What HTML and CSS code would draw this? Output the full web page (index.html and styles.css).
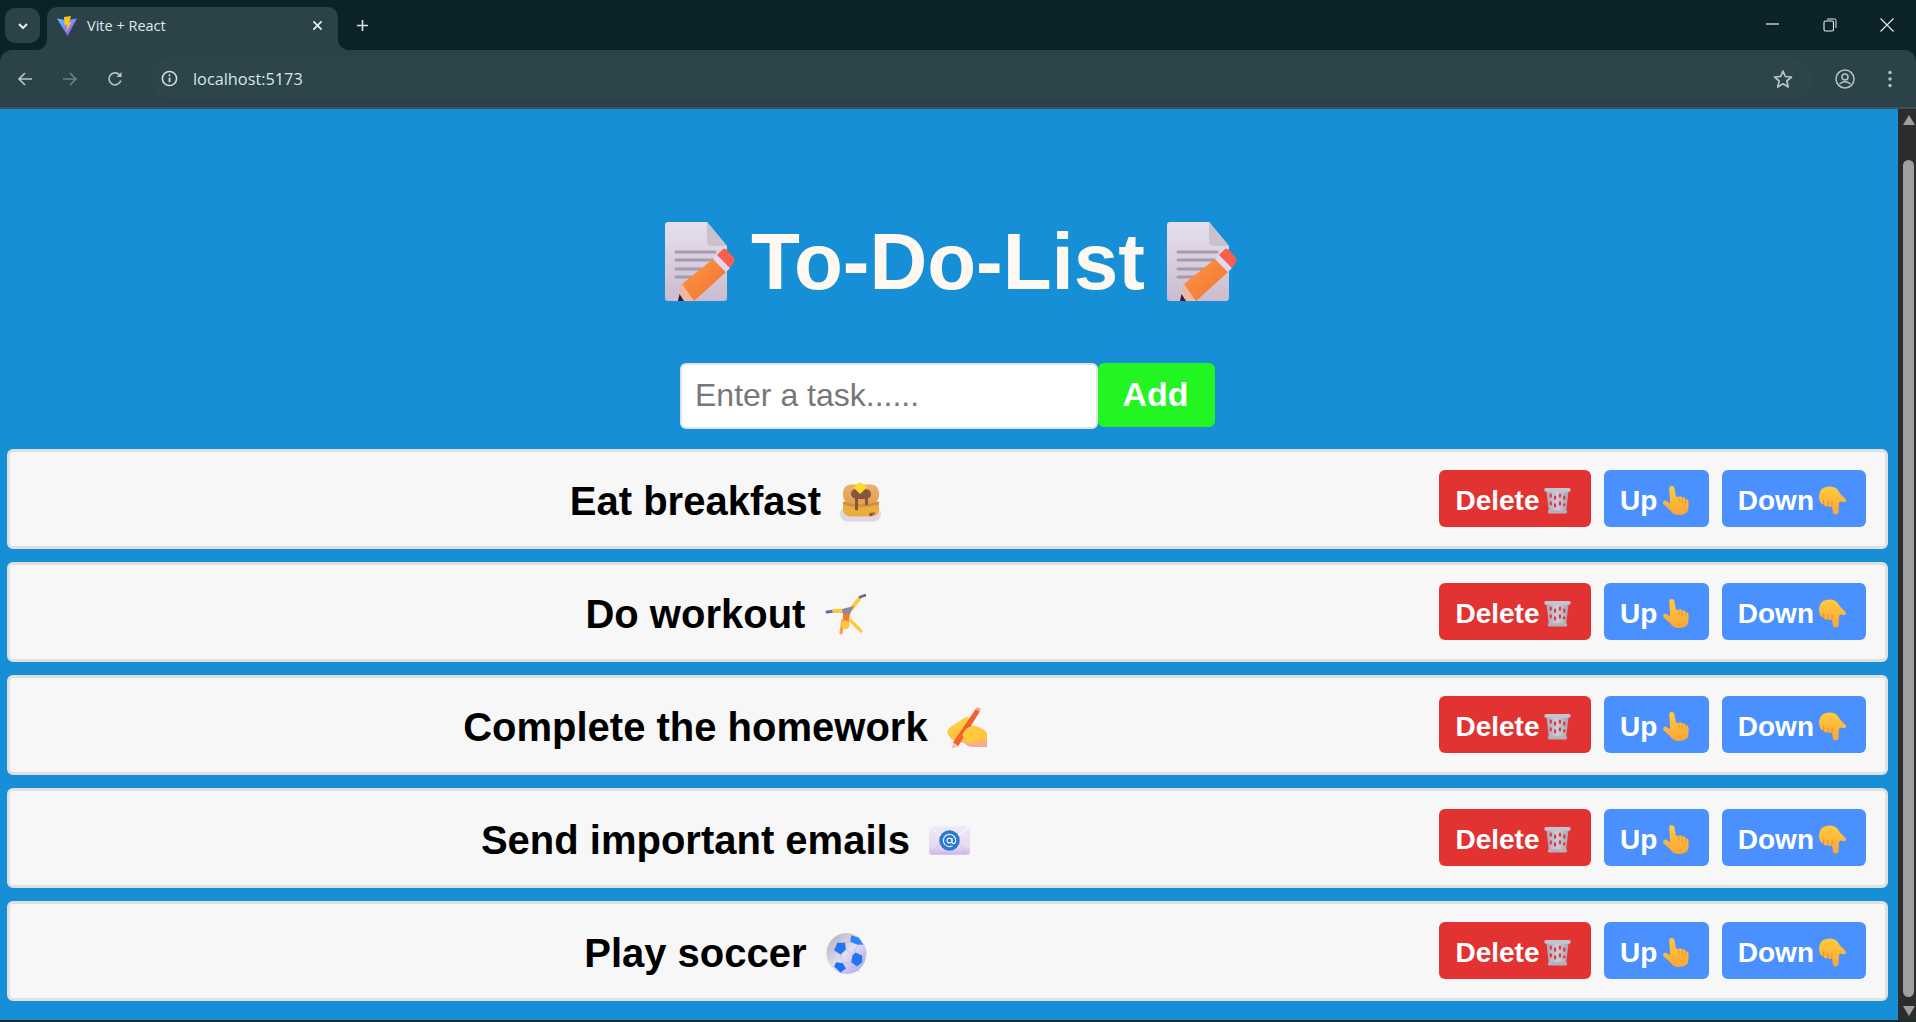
FILE: index.html
```html
<!DOCTYPE html>
<html lang="en">
<head>
<meta charset="utf-8">
<title>Vite + React</title>
<link rel="stylesheet" href="styles.css">
</head>
<body>
<svg class="defs" width="0" height="0" aria-hidden="true">
  <defs>
    <linearGradient id="paper" x1="0" y1="0" x2="0" y2="1"><stop offset="0" stop-color="#e6dfee"/><stop offset="1" stop-color="#cbbccf"/></linearGradient>
    <linearGradient id="orange" x1="0" y1="0" x2="1" y2="1"><stop offset="0" stop-color="#ff9a45"/><stop offset="1" stop-color="#f0702f"/></linearGradient>
    <linearGradient id="hand" x1="0" y1="0" x2="0" y2="1"><stop offset="0" stop-color="#ffcb3c"/><stop offset="1" stop-color="#fca538"/></linearGradient>
    <linearGradient id="wrist" x1="0" y1="0" x2="0" y2="1"><stop offset="0" stop-color="#ffd23f"/><stop offset=".7" stop-color="#ffc23f"/><stop offset="1" stop-color="#fb9fb0"/></linearGradient>
    <linearGradient id="cake" x1="0" y1="0" x2="0" y2="1"><stop offset="0" stop-color="#eeb06c"/><stop offset="1" stop-color="#e09f52"/></linearGradient>
    <linearGradient id="bin" x1="0" y1="0" x2="1" y2="0"><stop offset="0" stop-color="#a9a7b6"/><stop offset=".5" stop-color="#cfcdd8"/><stop offset="1" stop-color="#a4a2b0"/></linearGradient>
    <linearGradient id="ball" x1="0" y1="0" x2="1" y2="1"><stop offset="0" stop-color="#aeaab8"/><stop offset=".5" stop-color="#e2def2"/><stop offset="1" stop-color="#a49af6"/></linearGradient>
    <linearGradient id="mail" x1="0" y1="0" x2="0" y2="1"><stop offset="0" stop-color="#efe9f5"/><stop offset=".7" stop-color="#e6dcf2"/><stop offset="1" stop-color="#c9b4ee"/></linearGradient>

    <symbol id="e-memo" viewBox="0 0 70 80">
      <path d="M3 0H42L62 24V76Q62 79 59 79H3Q0 79 0 76V3Q0 0 3 0Z" fill="url(#paper)"/>
      <path d="M42 0L62 24H47Q42 24 42 19Z" fill="#c9c2cd"/>
      <path d="M11 30H50M11 38H50M11 47H45M11 55H30" stroke="#a59ca9" stroke-width="3" stroke-linecap="round"/>
      <path d="M17 62L48 37L61 50L29 79H13Z" fill="url(#orange)"/>
      <path d="M13 79L17 62L29 79Z" fill="#eeb9a2"/>
      <path d="M13 79L14.500 72L19 79Z" fill="#35184a"/>
      <path d="M48 37L52 33L65 46L61 50Z" fill="#e4d8f0"/>
      <path d="M52 33L58 27Q60 26 62 28L69 36Q70 38 69 40L65 46Z" fill="#fb5f4c"/>
    </symbol>

    <symbol id="e-pancake" viewBox="0 0 41 40">
      <rect x="0" y="25" width="41" height="15" rx="7.500" fill="#e2d5e8"/>
      <rect x="3" y="18" width="36" height="17" rx="7" fill="#e9ae3c"/>
      <rect x="3" y="3" width="36" height="19" rx="8" fill="url(#cake)"/>
      <path d="M3 20Q20 25 39 20V23Q20 28 3 23Z" fill="#cf8f42"/>
      <path d="M11 12Q11 7 20 7Q31 7 31 12Q31 16 28 17V23Q26.500 25 25 23V17.500H18V28Q16.500 30 15 28V17Q11 16 11 12Z" fill="#86563a"/>
      <path d="M20 0.500L27 6L20 12.500L13.500 6Z" fill="#ffd92e"/>
      <circle cx="31" cy="33" r="1.800" fill="#86563a"/>
      <circle cx="33.500" cy="32" r="1.200" fill="#86563a"/>
    </symbol>

    <symbol id="e-cartwheel" viewBox="0 0 41 41">
      <path d="M27 14L34 5" stroke="#ffc83e" stroke-width="3.800" stroke-linecap="round" fill="none"/>
      <path d="M35 3L41 1" stroke="#6d6a9b" stroke-width="2.800" stroke-linecap="round"/>
      <path d="M2 18L10 17" stroke="#6d6a9b" stroke-width="2.800" stroke-linecap="round"/>
      <path d="M9 17H20" stroke="#ffc83e" stroke-width="3.800" stroke-linecap="round"/>
      <path d="M17 15L29 12L25 20L18 20Z" fill="#8d8a9c"/>
      <path d="M18 20H25L24 29H18Z" fill="#f47b2e"/>
      <path d="M18 26L16 39" stroke="#f9a13b" stroke-width="3.200" stroke-linecap="round"/>
      <path d="M25 26L36 37" stroke="#ffc83e" stroke-width="3.200" stroke-linecap="round"/>
      <circle cx="20.500" cy="31" r="4.200" fill="#ffc83e"/>
    </symbol>

    <symbol id="e-writing" viewBox="0 0 40 40">
      <path d="M1 27Q-1 22 4 19L18 10Q21 9 22 12L24 18Q34 19 39 25V39H25Q20 39 17 35Q9 35 4 31Z" fill="url(#wrist)"/>
      <path d="M28 2L32 4.500L11 38L5.500 40L6 34.500Z" fill="#f4602b"/>
      <path d="M28 2L29.500 0L33.500 2L32 4.500Z" fill="#f7a4a8"/>
      <path d="M6 34.500L5.500 40L11 38Z" fill="#f7c3b0"/>
      <path d="M15 27Q19 19 24 19Q33 21 33 28Q32 35 24 36Q17 34 15 27Z" fill="#ffc83e"/>
    </symbol>

    <symbol id="e-mail" viewBox="0 0 40 28">
      <rect x="0" y="0" width="40" height="28" rx="3" fill="url(#mail)"/>
      <path d="M1 1L20 15L39 1" fill="none" stroke="#f8f4fb" stroke-width="1.500"/>
      <path d="M1 27L14 14M39 27L26 14" stroke="#d3c6e6" stroke-width="1"/>
      <circle cx="20" cy="14" r="10" fill="#2a78d0"/>
      <circle cx="20" cy="14" r="2.400" fill="none" stroke="#e4eefa" stroke-width="1.200"/>
      <path d="M22.400 11.500V15Q22.400 17 24 17Q26 17 26 14A6 6 0 1 0 23 19.200" fill="none" stroke="#e4eefa" stroke-width="1.200"/>
    </symbol>

    <symbol id="e-ball" viewBox="0 0 37 38">
      <ellipse cx="18.500" cy="19" rx="18.500" ry="19" fill="url(#ball)"/>
      <path d="M17 9L23 8L29 11L24 21L18 15ZM13 20L18 15M13 20L15 28L23 27L24 21M18 33L15 28M23 27L27 35M7 16L3 11M10 9L12 2M22 8L23 2M33 21L37 18M28 31L30 36" fill="none" stroke="#c4c0d2" stroke-width=".8"/>
      <path d="M23 2L30 4.500L34 11L29 11L22 8Z" fill="#2a86f5"/>
      <path d="M10 9L17 9L18 15L13 20L7 16Z" fill="#1e76f2"/>
      <path d="M27 18L33 21L33 27L28 31L23 27L24 21Z" fill="#1e76f2"/>
      <path d="M9 27L15 28L18 33L13 36.500L7 31Z" fill="#1e6ff0"/>
    </symbol>

    <symbol id="e-trash" viewBox="0 0 28 28">
      <path d="M2.500 4H25.500L23 25H5Z" fill="url(#bin)"/>
      <rect x="0.500" y="1" width="27" height="4" rx="1.500" fill="#c5c3cf"/>
      <rect x="4" y="24" width="20" height="3.500" rx="1.500" fill="#b3b1bf"/>
      <path d="M7 7V11M7 15V19M11.500 9V13M11.500 17V21M16.500 7V11M16.500 15V19M21 9V13M21 17V20" stroke="#e5323a" stroke-width="2.200"/>
    </symbol>

    <symbol id="e-up" viewBox="0 0 27 30">
      <path d="M7 2.500Q7 0 9.500 0Q12 0 12.500 2.500L14 11L17 11Q19 10 20 12Q23 11 24 13.500Q27 14 27 17V22Q27 30 17 30Q11 30 8 25L1 19Q0 17 1.500 15.500Q3.500 14.500 5 16L8 18Z" fill="url(#hand)"/>
      <path d="M17 12V16M20.500 13V17M24 14V18" stroke="#e8913a" stroke-width="1" stroke-linecap="round"/>
    </symbol>

    <symbol id="e-down" viewBox="0 0 27 28">
      <path d="M0 11Q0 0 11 0Q18 0 21 7L26 12Q28 14 26 15.500Q25 16 22 15L20 16L19.500 26Q19 28 16.500 28Q14 28 14 26L13 20Q10 21 9 19.500Q6 21 4.500 18Q1 18 0 11Z" fill="url(#hand)"/>
      <path d="M4.500 14V18M9 15V19.500M13 15V19" stroke="#e8913a" stroke-width="1.100" stroke-linecap="round"/>
    </symbol>
  </defs>
</svg>

<div class="window">
  <header class="tabstrip">
    <div class="tab-search">
      <svg class="ico12" viewBox="0 0 12 12"><path d="M2 4L6 8L10 4" fill="none" stroke="#e6eef0" stroke-width="2"/></svg>
    </div>
    <div class="tab">
      <svg class="favicon" viewBox="0 0 20 20">
        <defs>
          <linearGradient id="fav" x1="0" y1="0" x2="1" y2="1"><stop offset="0" stop-color="#41d1ff"/><stop offset="1" stop-color="#bd34fe"/></linearGradient>
        </defs>
        <path d="M0 2.500L9 4L20 2.500L10.500 20Z" fill="url(#fav)"/>
        <path d="M7 1L14 0L12 6.500L14.500 6L9.500 16L10 8.500L7.500 9Z" fill="#ffc517"/>
      </svg>
      <span class="tab-title">Vite + React</span>
      <svg class="tab-close" viewBox="0 0 12 12"><path d="M1.500 1.500L10.500 10.500M10.500 1.500L1.500 10.500" stroke="#e6eef0" stroke-width="1.800"/></svg>
    </div>
    <svg class="new-tab" viewBox="0 0 14 14"><path d="M7 1V13M1 7H13" stroke="#d5e0e2" stroke-width="1.800"/></svg>
    <div class="win-controls">
      <svg class="win-ico" viewBox="0 0 14 14"><path d="M0 6H13" stroke="#e8eeef" stroke-width="1.200"/></svg>
      <svg class="win-ico" viewBox="0 0 14 14"><rect x="1" y="3" width="9.500" height="10" rx="1.500" fill="none" stroke="#e8eeef" stroke-width="1.100"/><path d="M4 1H11.500Q13 1 13 2.500V10" fill="none" stroke="#e8eeef" stroke-width="1"/></svg>
      <svg class="win-ico" viewBox="0 0 14 14"><path d="M0.500 0.500L13.500 13.500M13.500 0.500L0.500 13.500" stroke="#e8eeef" stroke-width="1.100"/></svg>
    </div>
  </header>

  <nav class="toolbar">
    <svg class="nav-ico" viewBox="0 0 16 16"><path d="M15 8H2M8 2L2 8L8 14" fill="none" stroke="#b5c4c7" stroke-width="1.700"/></svg>
    <svg class="nav-ico dim" viewBox="0 0 16 16"><path d="M1 8H14M8 2L14 8L8 14" fill="none" stroke="#6d8085" stroke-width="1.700"/></svg>
    <svg class="nav-ico" viewBox="0 0 16 16"><path d="M13.800 9.500A6 6 0 1 1 12.500 3.800L14 5.300" fill="none" stroke="#b5c4c7" stroke-width="1.700"/><path d="M14.500 1V6H9.500Z" fill="#b5c4c7"/></svg>
    <div class="omnibox">
      <svg class="info" viewBox="0 0 18 18"><circle cx="9" cy="9" r="7.500" fill="none" stroke="#d5e0e2" stroke-width="1.600"/><path d="M9 8V13" stroke="#d5e0e2" stroke-width="1.800"/><circle cx="9" cy="5.500" r="1.100" fill="#d5e0e2"/></svg>
      <span class="url">localhost:5173</span>
      <svg class="star" viewBox="0 0 20 20"><path d="M10 2L12.300 7.500L18.500 8L13.800 12L15.300 18L10 14.800L4.700 18L6.200 12L1.500 8L7.700 7.500Z" fill="none" stroke="#b5c4c7" stroke-width="1.700" stroke-linejoin="round"/></svg>
    </div>
    <svg class="profile" viewBox="0 0 20 20"><circle cx="10" cy="10" r="9" fill="none" stroke="#b5c4c7" stroke-width="1.500"/><circle cx="10" cy="8" r="3" fill="none" stroke="#b5c4c7" stroke-width="1.500"/><path d="M4.500 15Q10 10.500 15.500 15" fill="none" stroke="#b5c4c7" stroke-width="1.500"/></svg>
    <svg class="menu" viewBox="0 0 4 18"><circle cx="2" cy="2.500" r="1.700" fill="#b5c4c7"/><circle cx="2" cy="9" r="1.700" fill="#b5c4c7"/><circle cx="2" cy="15.500" r="1.700" fill="#b5c4c7"/></svg>
  </nav>

  <div class="viewport">
    <main class="page">
      <h1 class="title"><svg class="e-title e-lead"><use href="#e-memo"/></svg> To-Do-List <svg class="e-title"><use href="#e-memo"/></svg></h1>
      <form class="add-form">
        <input class="task-input" type="text" placeholder="Enter a task......">
        <button class="add-btn" type="button"><span class="add-label">Add</span></button>
      </form>
      <ol class="tasks">
        <li class="task">
          <span class="task-text">Eat breakfast <svg class="e-task"><use href="#e-pancake"/></svg></span>
          <button class="btn del" type="button">Delete<svg class="e-btn"><use href="#e-trash"/></svg></button>
          <button class="btn move" type="button">Up<svg class="e-btn"><use href="#e-up"/></svg></button>
          <button class="btn move" type="button">Down<svg class="e-btn"><use href="#e-down"/></svg></button>
        </li>
        <li class="task">
          <span class="task-text">Do workout <svg class="e-task"><use href="#e-cartwheel"/></svg></span>
          <button class="btn del" type="button">Delete<svg class="e-btn"><use href="#e-trash"/></svg></button>
          <button class="btn move" type="button">Up<svg class="e-btn"><use href="#e-up"/></svg></button>
          <button class="btn move" type="button">Down<svg class="e-btn"><use href="#e-down"/></svg></button>
        </li>
        <li class="task">
          <span class="task-text">Complete the homework <svg class="e-task"><use href="#e-writing"/></svg></span>
          <button class="btn del" type="button">Delete<svg class="e-btn"><use href="#e-trash"/></svg></button>
          <button class="btn move" type="button">Up<svg class="e-btn"><use href="#e-up"/></svg></button>
          <button class="btn move" type="button">Down<svg class="e-btn"><use href="#e-down"/></svg></button>
        </li>
        <li class="task">
          <span class="task-text">Send important emails <svg class="e-task"><use href="#e-mail"/></svg></span>
          <button class="btn del" type="button">Delete<svg class="e-btn"><use href="#e-trash"/></svg></button>
          <button class="btn move" type="button">Up<svg class="e-btn"><use href="#e-up"/></svg></button>
          <button class="btn move" type="button">Down<svg class="e-btn"><use href="#e-down"/></svg></button>
        </li>
        <li class="task">
          <span class="task-text">Play soccer <svg class="e-task"><use href="#e-ball"/></svg></span>
          <button class="btn del" type="button">Delete<svg class="e-btn"><use href="#e-trash"/></svg></button>
          <button class="btn move" type="button">Up<svg class="e-btn"><use href="#e-up"/></svg></button>
          <button class="btn move" type="button">Down<svg class="e-btn"><use href="#e-down"/></svg></button>
        </li>
      </ol>
    </main>
    <aside class="scrollbar">
      <span class="arrow-up"></span>
      <span class="thumb"></span>
      <span class="arrow-down"></span>
    </aside>
  </div>
</div>
</body>
</html>
```
FILE: styles.css
```css
* { box-sizing: border-box; }
html, body { margin: 0; height: 100%; overflow: hidden; }
body { font-family: "Liberation Sans", Arial, sans-serif; background: #0b2328; }
.defs { position: absolute; }
.window { height: 1022px; display: flex; flex-direction: column; }

/* browser chrome */
.tabstrip { height: 50px; flex: none; display: flex; align-items: flex-start; background: #0b2328; padding: 7px 22px 0 5px; }
.tab-search { width: 35px; height: 35px; margin-top: 1px; border-radius: 10px; background: #2b4248; display: flex; align-items: center; justify-content: center; }
.ico12 { width: 12px; height: 12px; }
.tab { width: 291px; height: 43px; margin-left: 7px; border-radius: 10px 10px 0 0; background: #2b4248; display: flex; align-items: center; padding: 0 15px 6px 10px; position: relative; }
.tab::before, .tab::after { content: ""; position: absolute; bottom: 0; width: 10px; height: 10px; }
.tab::before { left: -10px; background: radial-gradient(circle at 0 0, transparent 9.500px, #2b4248 10px); }
.tab::after { right: -10px; background: radial-gradient(circle at 100% 0, transparent 9.500px, #2b4248 10px); }
.favicon { width: 20px; height: 20px; flex: none; }
.tab-title { margin-left: 10px; flex: 1; font: 14.500px "Open Sans", sans-serif; color: #dfe8ea; }
.tab-close { width: 11px; height: 11px; }
.new-tab { width: 13px; height: 13px; margin: 12px 0 0 18px; }
.win-controls { margin-left: auto; margin-top: 11px; display: flex; gap: 43px; }
.win-ico { width: 14px; height: 14px; }

.toolbar { height: 59px; flex: none; display: flex; align-items: center; background: #2b4248; border-radius: 12px 12px 0 0; border-bottom: 2px solid #3d5056; padding: 0 20px 0 17px; position: relative; }
.nav-ico { width: 16px; height: 16px; flex: none; margin-right: 29px; }
.omnibox { width: 1664px; height: 42px; margin-left: -2px; border-radius: 21px; background: #2c444a; display: flex; align-items: center; padding: 0 21px 0 11px; flex: none; }
.info { width: 17px; height: 17px; flex: none; }
.url { margin-left: 15px; flex: 1; font: 16.300px "Open Sans", sans-serif; color: #d8e6ea; }
.star { width: 20px; height: 20px; }
.profile { width: 20px; height: 20px; margin-left: 21px; flex: none; }
.menu { width: 4px; height: 18px; margin-left: 33px; flex: none; }

.viewport { flex: 1; display: flex; min-height: 0; border-bottom: 2px solid #1f2a2c; }
.scrollbar { width: 18px; flex: none; background: #2c2c2c; display: flex; flex-direction: column; align-items: center; padding: 6px 0 0 3px; }
.arrow-up { width: 0; height: 0; border: 6.500px solid transparent; border-top: 0; border-bottom: 10px solid #a0a0a0; }
.thumb { width: 11px; height: 837px; margin-top: 35px; border-radius: 6px; background: #9f9f9f; }
.arrow-down { width: 0; height: 0; margin-top: 9px; border: 6.500px solid transparent; border-bottom: 0; border-top: 10px solid #a0a0a0; }

/* app */
.page { flex: 1; min-width: 0; background: #168fd6; overflow: hidden; padding: 0 10px 0 7px; }
.title { margin: 107px 0 0; padding-left: 7px; font-size: 80px; line-height: 92px; font-weight: 700; color: #fff8f0; text-align: center; white-space: nowrap; }
.e-title { width: 70px; height: 80px; vertical-align: -13px; }
.e-lead { margin-right: -6px; }
.add-form { display: flex; justify-content: center; align-items: flex-start; margin-top: 55px; }
.task-input { width: 418px; height: 66px; border: 2px solid #e0e4e6; border-radius: 6px; background: #fff; padding: 0 13px 2px; font: 32px "Liberation Sans", Arial, sans-serif; color: #222; outline: none; }
.task-input::placeholder { color: #777; opacity: 1; }
.add-btn { width: 117px; height: 64px; border: 0; border-radius: 6px; padding: 0 2px 2px 0; background: #22f522; color: #fff; font: 700 34px "Liberation Sans", Arial, sans-serif; }

.tasks { list-style: none; margin: 20px 0 0; padding: 0; display: flex; flex-direction: column; gap: 13px; }
.task { height: 100px; flex: none; display: flex; align-items: center; gap: 12.500px; padding: 0 19px 1px 0; border: 3px solid #e0e0e0; border-radius: 6px; background: #f7f7f7; }
.task-text { flex: 1; padding: 5px 0 0 14px; text-align: center; font-size: 40px; font-weight: 700; color: #000; white-space: nowrap; }
.e-task { width: 41px; height: 41px; margin-left: 8px; vertical-align: -7px; }
.btn { height: 57px; flex: none; display: flex; align-items: center; border: 0; border-radius: 6px; padding: 4px 20px 0 16px; color: #fff; font: 700 28px "Liberation Sans", Arial, sans-serif; }
.del { background: #e33232; }
.move { background: #4a90ff; }
.e-btn { width: 27px; height: 29px; margin: -1px 0 0 5px; flex: none; }
```
